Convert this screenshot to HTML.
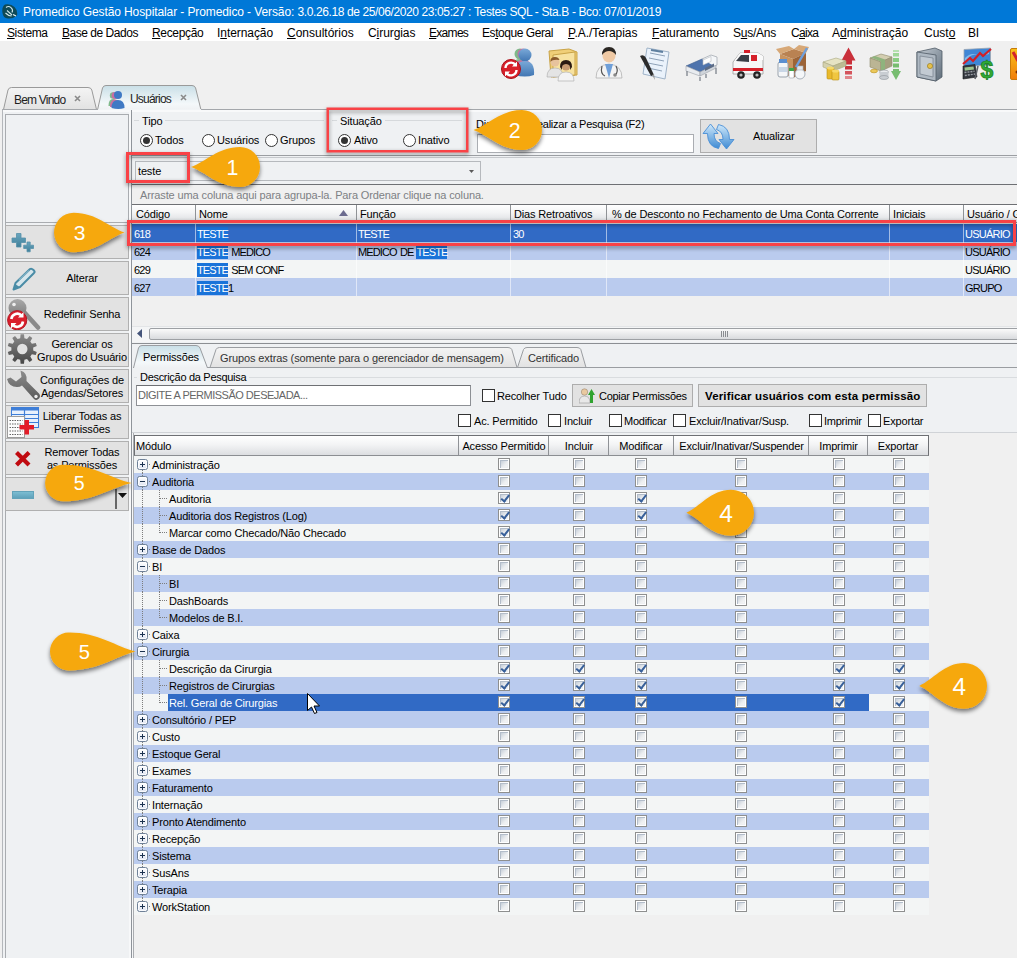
<!DOCTYPE html>
<html lang="pt-BR">
<head>
<meta charset="utf-8">
<title>Promedico Gestão Hospitalar</title>
<style>
*{box-sizing:border-box;margin:0;padding:0}
html,body{width:1017px;height:958px;overflow:hidden}
body{position:relative;background:#f0f0f0;font-family:"Liberation Sans",sans-serif;font-size:11px;letter-spacing:-0.15px;color:#000;line-height:13px}
.a{position:absolute;white-space:nowrap}
u{text-decoration:none}
/* title + menu */
#title{left:0;top:0;width:1017px;height:23px;background:#0078d7}
#title>span{left:23px;top:5px;color:#fff;font-size:12px;line-height:15px;letter-spacing:-0.26px}
#menu{left:0;top:23px;width:1017px;height:18px;background:#fff}
#menu span{position:absolute;top:3px;font-size:12px;line-height:15px;letter-spacing:-0.2px;white-space:nowrap}
#menu span em{font-style:normal;text-decoration:underline}
/* tabs */
.tabtx{font-size:12px;line-height:14px;letter-spacing:-0.8px;color:#1e1e1e}
/* panel */
#panel{left:2px;top:109px;width:1020px;height:860px;background:#eff1f3;border-top:1px solid #a4a7ab;border-left:1px solid #b4b7bb;box-shadow:inset 0 2px 0 #f8f9fa}
.hline{position:absolute;height:1px;background:#9c9fa3}
.vline{position:absolute;width:1px;background:#9c9fa3}
/* side buttons */
.sb{position:absolute;left:5px;width:124px;height:34px;background:#e2e2e2;border:1px solid #b0b0b0}
.sb .tx{position:absolute;left:30px;width:92px;text-align:center;line-height:13px;font-size:11px}
/* radios */
.rd{position:absolute;width:13px;height:13px;border-radius:50%;border:1px solid #333;background:#fff}
.rd.on:after{content:"";position:absolute;left:2px;top:2px;width:7px;height:7px;border-radius:50%;background:#333}
.bx{position:absolute;width:13px;height:13px;border:1px solid #333;background:#fff}
/* grid header */
.gh{position:absolute;height:19px;border-top:1px solid #6e7074;border-bottom:1px solid #8b8e92;background:linear-gradient(#ffffff,#f3f4f5 45%,#dcdee1)}
.gh span{position:absolute;top:3px;white-space:nowrap}
.gh i{position:absolute;top:0;width:1px;height:17px;background:#8f9296}
.gr{position:absolute;left:132px;width:885px;height:18px;background:#f3f5f5}
.gr.b{background:#bacbee}
.gr.s{background:#316ac5;color:#fff}
.gr span{position:absolute;top:4px;white-space:nowrap;letter-spacing:-.75px}
.gr i{position:absolute;top:0;width:1px;height:18px;background:rgba(255,255,255,.55)}
.gr mark{background:#1a73d9;color:#fff;padding:1px 0}
/* tree */
.tr{position:absolute;left:134px;width:795px;height:17px;background:#f3f5f5}
.tr.b{background:#bacbee}
.tr .tx{position:absolute;top:3px;white-space:nowrap}
.tr .selbg{position:absolute;left:34px;top:0;width:701px;height:17px;background:#316ac5}
.vl{position:absolute;width:1px;background-image:linear-gradient(#7d7d7d 50%,transparent 50%);background-size:1px 2px}
.hl{position:absolute;height:1px;background-image:linear-gradient(90deg,#7d7d7d 50%,transparent 50%);background-size:2px 1px}
.ex{position:absolute;left:3px;top:3px;width:11px;height:11px;border:1px solid #6f8198;border-radius:2.5px;background:linear-gradient(#ffffff,#dfe4f1);box-shadow:inset 0 0 0 1px rgba(255,255,255,.8)}
.ex:before{content:"";position:absolute;left:2px;top:4px;width:5px;height:1px;background:#1c3350}
.ex.pl:after{content:"";position:absolute;left:4px;top:2px;width:1px;height:5px;background:#1c3350}
.cb{position:absolute;top:2px;width:12px;height:12px;border:1px solid #8e8f8f;background:#fff}
.cb:before{content:"";position:absolute;left:1px;top:1px;width:8px;height:8px;background:linear-gradient(135deg,#bcc6d2,#eceef0 60%,#f8f8f8);box-shadow:inset 1px 1px 0 #b3bdca,inset -1px -1px 0 #eef0f2}
.cb.ck:after{content:"";position:absolute;left:4px;top:0px;width:2.5px;height:6.5px;border:solid #38609a;border-width:0 2px 2px 0;transform:rotate(38deg)}
/* callouts */
.red{position:absolute;border:2px solid #f94246;filter:drop-shadow(0 2px 2px rgba(0,0,0,.45))}
svg.co{position:absolute;overflow:visible}
svg.co text{font-family:"Liberation Sans",sans-serif;font-size:24px;fill:#fff;text-anchor:middle;letter-spacing:0}
</style>
</head>
<body>
<!-- title -->
<div id="title" class="a">
<svg class="a" style="left:2px;top:4px" width="16" height="15" viewBox="0 0 16 15"><path d="M3 0.500Q9 -0.500 12.500 3T15 11.500Q11 15 6 14.500T0.500 9Q-0.500 3 3 0.500Z" fill="#0e4a57"/><path d="M4 3.500a4 4 0 0 1 6 5M5 6.500l5 4.500M3.500 9q3 3 6 3" stroke="#cfe6ea" stroke-width="1.100" fill="none"/><path d="M11 10.500l3 1.500" stroke="#e6f2f4" stroke-width="1.300"/></svg>
<span class="a" style="white-space:pre"><span style="letter-spacing:-.1px">Promedico Gestão Hospitalar - Promedico - Versão: </span><span style="letter-spacing:-.39px">3.0.26.18 de 25/06/2020 23:05:27 : </span><span style="letter-spacing:-.37px">Testes SQL - Sta.B - Bco: </span><span style="letter-spacing:-.3px">07/01/2019</span></span>
</div>
<!-- menu -->
<div id="menu" class="a">
<span style="left:7px;letter-spacing:-.4px"><em>S</em>istema</span>
<span style="left:62px;letter-spacing:-.47px"><em>B</em>ase de Dados</span>
<span style="left:152px;letter-spacing:-.33px"><em>R</em>ecepção</span>
<span style="left:217px;letter-spacing:-.07px">I<em>n</em>ternação</span>
<span style="left:287px;letter-spacing:0"><em>C</em>onsultórios</span>
<span style="left:368px;letter-spacing:-.07px">C<em>i</em>rurgias</span>
<span style="left:429px;letter-spacing:-.7px"><em>E</em>xames</span>
<span style="left:482px;letter-spacing:-.44px">Es<em>t</em>oque Geral</span>
<span style="left:568px;letter-spacing:-.03px"><em>P</em>.A./Terapias</span>
<span style="left:652px;letter-spacing:-.09px"><em>F</em>aturamento</span>
<span style="left:733px;letter-spacing:-.24px">S<em>u</em>s/Ans</span>
<span style="left:791px;letter-spacing:-.7px">C<em>a</em>ixa</span>
<span style="left:832px;letter-spacing:0">A<em>d</em>ministração</span>
<span style="left:924px;letter-spacing:0">Cust<em>o</em></span>
<span style="left:968px">BI</span>
</div>
<svg class="a" style="left:495px;top:44px" width="522" height="40" viewBox="495 44 522 40">
<defs>
<linearGradient id="gb" x1="0" y1="0" x2="0" y2="1"><stop offset="0" stop-color="#7aa9d8"/><stop offset="1" stop-color="#4176b3"/></linearGradient>
<linearGradient id="gs" x1="0" y1="0" x2="1" y2="1"><stop offset="0" stop-color="#c4ccd4"/><stop offset="1" stop-color="#5f6d7a"/></linearGradient>
</defs>
<!-- 1 users refresh -->
<g><circle cx="520" cy="54" r="5.500" fill="#7fb98a"/><path d="M511 72q0-13 9-13t9 13z" fill="#7fb98a"/><circle cx="523" cy="54" r="5.500" fill="#c96fa2"/><path d="M513 73q0-13 10-13t10 13z" fill="#c96fa2"/><circle cx="525" cy="55" r="6.500" fill="url(#gb)"/><path d="M515 75q0-14 10-14t9 14q-9 3-19 0z" fill="url(#gb)"/><circle cx="511" cy="69" r="9.500" fill="#d8202a" stroke="#a80f18"/><path d="M505.500 68a5.500 5.500 0 0 1 10-3M516.500 70a5.500 5.500 0 0 1-10 3" fill="none" stroke="#fff" stroke-width="2.400"/><path d="M517 61.500v5h-5zM505 76.500v-5h5z" fill="#fff"/></g>
<!-- 2 folder people -->
<g><path d="M549 51l20-2 8 3v23l-26 2z" fill="#f0cf78" stroke="#c9a347"/><path d="M553 55l22-3v23l-22 2z" fill="#f7e2a0" stroke="#c9a347"/><circle cx="555" cy="62" r="4.500" fill="#e7c39d"/><path d="M555 57q-5 0-4.500 5 2-3 9-2-1-3-4.500-3z" fill="#8a5a2b"/><path d="M547 77q0-9 8-9t8 9z" fill="#e4e4e4" stroke="#aaa" stroke-width=".6"/><circle cx="566" cy="66" r="4.500" fill="#c89b72"/><path d="M566 60q-6 0-6 7l2 3q-1-6 4-6t4 6l2-3q0-7-6-7z" fill="#2b1a12"/><path d="M558 81q0-9 8-9t8 9z" fill="#f3f3f3" stroke="#aaa" stroke-width=".6"/></g>
<!-- 3 doctor -->
<g><path d="M596 78q0-13 13-14 13 1 13 14z" fill="#f4f4f4" stroke="#a9a9a9" stroke-width=".7"/><path d="M605 64l4 14 4-14z" fill="#6f9fd8"/><circle cx="609" cy="56" r="6.500" fill="#efc9a4"/><path d="M602 55q0-8 7-8t7 8q-3-4-7-4t-7 4z" fill="#2a2622"/><path d="M602 66q-2 8 3 10M616 66q3 6-1 9" fill="none" stroke="#555" stroke-width="1.200"/><circle cx="615" cy="75" r="1.800" fill="#888"/></g>
<!-- 4 document pen -->
<g><path d="M647 48l22 4-4 27-22-5z" fill="#eaf2fb" stroke="#9fb3c8"/><path d="M650 53l15 3M649 58l15 3M648 63l15 3M648 68l14 3" stroke="#8ea2b8" stroke-width="1"/><path d="M651 50l12 2" stroke="#5e7f9f" stroke-width="2"/><path d="M640 56q4-2 6 2l8 17-3 1z" fill="#2b2b2b"/><path d="M652 75l3 5-1-6z" fill="#999"/></g>
<!-- 5 bed -->
<g><path d="M686 66l16-7 14 5-16 8z" fill="#4f74ad" stroke="#3d5c8c" stroke-width=".6"/><path d="M686 66l14 6v4l-14-5z" fill="#e9ecf0" stroke="#9aa0a8" stroke-width=".6"/><path d="M700 72l16-8v4l-16 8z" fill="#cfd4da" stroke="#9aa0a8" stroke-width=".6"/><path d="M702 59l9-4 6 2v8l-3 1" fill="#f4f6f8" stroke="#a5abb3" stroke-width=".8"/><path d="M703 60l8-3.500v5l-8 3.500z" fill="#fdfdfd" stroke="#b5bac1" stroke-width=".6"/><path d="M687 71v5M700 77v4M716 68v6M706 74v4" stroke="#8c9199" stroke-width="1.500"/><path d="M705 68l9-4.500v3l-9 4.500z" fill="#5b6b86"/></g>
<!-- 6 ambulance -->
<g><path d="M733 62l7-9h18l5 3v18h-30z" fill="#f7f7f7" stroke="#a0a0a0" stroke-width=".8"/><path d="M740 53h18l5 3v4h-28z" fill="#fafafa"/><path d="M736 61l5-6h8v7z" fill="#3a3f47"/><path d="M733 68h30v3h-30z" fill="#d5202a"/><path d="M751 55h6v6h-6z" fill="#d5202a"/><path d="M744 50h6v3h-6z" fill="#d5202a"/><circle cx="741" cy="75" r="3.800" fill="#222"/><circle cx="741" cy="75" r="1.600" fill="#bbb"/><circle cx="757" cy="75" r="3.800" fill="#222"/><circle cx="757" cy="75" r="1.600" fill="#bbb"/></g>
<!-- 7 box + medicines -->
<g><path d="M780 54l14-5 12 4-13 6z" fill="#b98252"/><path d="M793 59l13-6v18l-13 7z" fill="#9c6437"/><path d="M780 54l13 5v19l-13-6z" fill="#c8935f"/><path d="M780 54l-4-5 13-3 5 3zM806 53l3-6-10-2-5 4z" fill="#d7a877"/><rect x="778" y="62" width="10" height="15" rx="2" fill="#f4f6f8" stroke="#9aa3ad"/><rect x="779" y="59" width="8" height="4" fill="#5b8fd0"/><rect x="779" y="67" width="8" height="5" fill="#c9d6e6"/><circle cx="800" cy="74" r="5" fill="#f4f6f8" stroke="#a9b1ba"/><rect x="797" y="66" width="6" height="4" fill="#e3e6ea" stroke="#a9b1ba" stroke-width=".6"/><path d="M807 48l-11 19" stroke="#6ea0dd" stroke-width="2.400"/><rect x="789" y="70" width="5" height="8" rx="1" fill="#fff" stroke="#9aa3ad" stroke-width=".6"/><rect x="789" y="68" width="5" height="3" fill="#3fa34a"/></g>
<!-- 8 money up -->
<g><path d="M848.500 47.500l7 13h-3.500v4h-7v-4h-3.500z" fill="#c9303a"/><rect x="845" y="66" width="7" height="3.500" fill="#c9303a"/><rect x="845" y="71" width="7" height="3.500" fill="#d4545c"/><rect x="845" y="76" width="7" height="3" fill="#e0868b"/><path d="M823 62l13-4 10 3-13 5z" fill="#e6e3c4" stroke="#a8a67e" stroke-width=".6"/><path d="M823 62l10 4v5l-10-4z" fill="#d4d1ae" stroke="#a8a67e" stroke-width=".6"/><path d="M833 66l13-5v5l-13 5z" fill="#bdbb93" stroke="#a8a67e" stroke-width=".6"/><rect x="827" y="68" width="7" height="11" rx="1" fill="#e9b92c" stroke="#b88d12" stroke-width=".6"/><rect x="832" y="71" width="7" height="9" rx="1" fill="#f0c640" stroke="#b88d12" stroke-width=".6"/><ellipse cx="830.500" cy="68" rx="3.500" ry="1.500" fill="#f7d968"/><ellipse cx="835.500" cy="71" rx="3.500" ry="1.500" fill="#f7d968"/></g>
<!-- 9 money down -->
<g><path d="M896 80l5-9h-2v-2h-6v2h-2z" fill="#77bd70"/><rect x="893" y="63.500" width="6" height="4" fill="#77bd70"/><rect x="893" y="58" width="6" height="4" fill="#8acc82"/><rect x="893" y="53" width="6" height="3.500" fill="#9fd698"/><rect x="893" y="50" width="6" height="2" fill="#b6e0b0"/><path d="M870 58l11-4 11 3-11 5z" fill="#d3cdb0" stroke="#8f8a6b" stroke-width=".6"/><path d="M870 58l11 4v9l-11-4z" fill="#bbb594" stroke="#8f8a6b" stroke-width=".6"/><path d="M881 62l11-5v9l-11 5z" fill="#a59f7f" stroke="#8f8a6b" stroke-width=".6"/><path d="M875 56l10 3.500v10l-4 1.500v-9.500l-10-4z" fill="#8fb37d"/><ellipse cx="884" cy="72" rx="4.500" ry="2" fill="#e9ebee" stroke="#8d9299" stroke-width=".6"/><rect x="879.500" y="72" width="9" height="5.500" fill="#c9cdd2"/><ellipse cx="884" cy="77.500" rx="4.500" ry="2" fill="#c9cdd2" stroke="#8d9299" stroke-width=".6"/><ellipse cx="874" cy="71" rx="3.500" ry="1.800" fill="#ecc95a" stroke="#b88d12" stroke-width=".6"/></g>
<!-- 10 safe -->
<g><path d="M917 52l18-4 7 3v26l-6 4-19-4z" fill="url(#gs)" stroke="#4f5a66" stroke-width=".8"/><path d="M917 52l19 3v26l-19-4z" fill="#aeb8c2" stroke="#4f5a66" stroke-width=".8"/><path d="M920 56l13 2v19l-13-3z" fill="#c2cad2" stroke="#7c8792" stroke-width=".8"/><circle cx="930" cy="66" r="2.600" fill="#e6c04a" stroke="#8f7417" stroke-width=".6"/></g>
<!-- 11 chart calculator dollar -->
<g><path d="M964 49.500l26.500-1.500v17l-26.500 1.500z" fill="#3f86d6" stroke="#9aa6b3" stroke-width=".8"/><path d="M965 58q6-6 12-3t12-5v4q-8 3-13 1t-11 7z" fill="#9fd0f2" opacity=".7"/><path d="M963 64l7-6 3 3 7-8 3 3 8-7" fill="none" stroke="#d21f26" stroke-width="2.200"/><path d="M963 66l12-1.500 2 12.500-14 2z" fill="#33373e" stroke="#15171a" stroke-width=".6"/><path d="M964.500 67.500l9-1 .5 3-9.200 1.200z" fill="#9dc58e"/><path d="M964.500 72.500l10-1.300M964.800 75.500l10.200-1.500" stroke="#9a9ea5" stroke-width="1.400" stroke-dasharray="2 1"/><path d="M978 66l-3 13" stroke="#5d6168" stroke-width="1.500"/><text x="980.500" y="78" style="font-family:'Liberation Sans',sans-serif;font-size:23px;font-weight:bold;fill:#2faa35;stroke:#1a7d20;stroke-width:.7px">$</text></g>
<!-- 12 partial -->
<g><defs><linearGradient id="og" x1="0" y1="0" x2="0" y2="1"><stop offset="0" stop-color="#f9c21a"/><stop offset="1" stop-color="#f07d0a"/></linearGradient></defs><rect x="1010.500" y="48.500" width="10" height="31" rx="1.500" fill="url(#og)" stroke="#c77a08"/><path d="M1013 52l5 9" stroke="#d2232c" stroke-width="3"/><circle cx="1017" cy="72" r="1.500" fill="#7a2a00"/></g>
</svg>

<svg class="a" style="left:0;top:84px" width="220" height="27" viewBox="0 0 220 27">
<defs><linearGradient id="tg1" x1="0" y1="0" x2="0" y2="1"><stop offset="0" stop-color="#f4f4f4"/><stop offset="1" stop-color="#e2e2e2"/></linearGradient>
<linearGradient id="tg2" x1="0" y1="0" x2="0" y2="1"><stop offset="0" stop-color="#c9dfe7"/><stop offset=".75" stop-color="#f4f8fa"/><stop offset="1" stop-color="#eff1f3"/></linearGradient></defs>
<path d="M3.5 25.5 L8 6 Q8.8 3.5 11.5 3.5 H88 Q91 3.5 91.8 6 L96.5 25.5 Z" fill="url(#tg1)" stroke="#9a9a9a"/>
<path d="M97.5 26 L102.5 4 Q103.3 1.5 106 1.5 H192 Q194.8 1.5 195.6 4 L201 26" fill="url(#tg2)" stroke="#9a9a9a"/>
<g stroke="#8a8a8a" stroke-width="1.6"><path d="M75 12l5 5m0-5l-5 5"/><path d="M181 11l5 5m0-5l-5 5"/></g>
<g><circle cx="113" cy="11.5" r="3.2" fill="#7fb98a"/><path d="M108.5 22q0-7 4.5-7t4.5 7z" fill="#7fb98a"/><circle cx="115" cy="11.5" r="3.4" fill="#c96fa2"/><path d="M110 23q0-7.5 5-7.5t5 7.5z" fill="#c96fa2"/><circle cx="118" cy="11" r="4" fill="#3f79c4"/><path d="M111.5 24q0-8 6.500-8t6.500 8q-6 2-13 0z" fill="#3f79c4"/></g>
</svg>
<span class="a tabtx" style="left:14px;top:93px">Bem Vindo</span>
<span class="a tabtx" style="left:130px;top:92px">Usuários</span>

<div id="panel" class="a"></div>
<div class="a" style="left:98px;top:109px;width:103px;height:1px;background:#f1f4f6"></div>
<div class="vline" style="left:5px;top:114px;height:850px;background:#a9acb0"></div>
<div class="vline" style="left:129px;top:110px;width:2px;height:850px;background:#f7f8f9"></div><div class="vline" style="left:131px;top:110px;height:850px;background:#8f949a"></div>
<div class="a" style="left:5px;top:114px;width:124px;height:109px;border:1px solid #a9acb0;background:#eff1f3"></div>
<!-- side buttons -->
<div class="sb" style="top:225px">
<svg class="a" style="left:5px;top:6px" width="26" height="22" viewBox="0 0 26 22"><defs><linearGradient id="tl" x1="0" y1="0" x2="0" y2="1"><stop offset="0" stop-color="#6aa6bf"/><stop offset="1" stop-color="#3f7f99"/></linearGradient></defs><path d="M5.500 1.500h4.500v4.500h4.500v4.500H10v4.500H5.500v-4.500H1V6h4.500z" fill="url(#tl)" stroke="#5590a9" stroke-width=".8"/><path d="M16 10h3.200v3.200h3.300v3.300h-3.300v3.300H16v-3.300h-3.300v-3.300H16z" fill="url(#tl)" stroke="#5590a9" stroke-width=".8"/></svg>
</div>
<div class="sb" style="top:261px">
<svg class="a" style="left:5px;top:4px" width="26" height="26" viewBox="0 0 26 26"><path d="M2.500 23.500l2-6.500L19 3q1.500-1 3.500 1t.5 3L9 21z" fill="#d7e6ec" stroke="#4a8ca6" stroke-width="2" stroke-linejoin="round"/><path d="M2.500 23.500l1.800-5.500 4.500 3.200z" fill="#4a8ca6"/><path d="M8 14l10-9.500" stroke="#7fb0c4" stroke-width="1.500"/></svg>
<span class="tx" style="top:10px">Alterar</span></div>
<div class="sb" style="top:297px">
<svg class="a" style="left:0;top:0" width="36" height="32" viewBox="0 0 36 32"><defs><linearGradient id="kg" x1="0" y1="0" x2="0" y2="1"><stop offset="0" stop-color="#a9a9a9"/><stop offset="1" stop-color="#7c7c7c"/></linearGradient></defs><path d="M18 14l14 15.500" stroke="#8a8a8a" stroke-width="4.600" stroke-linecap="round"/><circle cx="11.500" cy="10" r="9" fill="url(#kg)"/><circle cx="8" cy="6.500" r="1.800" fill="#eee"/><circle cx="11.200" cy="22.200" r="9.600" fill="#da1f2c" stroke="#b31622"/><path d="M5.300 21a6 6 0 0 1 10.500-3.200M17 23.500a6 6 0 0 1-10.500 3.200" fill="none" stroke="#fff" stroke-width="2.600"/><path d="M17.500 14v5.500H12zM5 30.500V25h5.500z" fill="#fff"/></svg>
<span class="tx" style="top:10px">Redefinir Senha</span></div>
<div class="sb" style="top:333px">
<svg class="a" style="left:1px;top:0" width="32" height="31" viewBox="0 0 32 31"><defs><linearGradient id="gg" x1="0" y1="0" x2="0" y2="1"><stop offset="0" stop-color="#8a8a8a"/><stop offset="1" stop-color="#474747"/></linearGradient></defs><path fill-rule="evenodd" d="M13.2 4.2 L13.6 0.3 L17.0 0.3 L17.4 4.2 L20.0 5.0 L22.6 2.1 L25.3 4.1 L23.3 7.5 L24.9 9.7 L28.8 8.9 L29.8 12.0 L26.2 13.6 L26.2 16.4 L29.8 18.0 L28.8 21.1 L24.9 20.3 L23.3 22.5 L25.3 25.9 L22.6 27.9 L20.0 25.0 L17.4 25.8 L17.0 29.7 L13.6 29.7 L13.2 25.8 L10.6 25.0 L8.0 27.9 L5.3 25.9 L7.3 22.5 L5.7 20.3 L1.8 21.1 L0.8 18.0 L4.4 16.4 L4.4 13.6 L0.8 12.0 L1.8 8.9 L5.7 9.7 L7.3 7.5 L5.3 4.1 L8.0 2.1 L10.6 5.0Z M10.1 15a5.2 5.2 0 1 0 10.4 0a5.2 5.2 0 1 0 -10.4 0Z" fill="url(#gg)"/></svg>
<span class="tx" style="top:4px">Gerenciar os<br>Grupos do Usuário</span></div>
<div class="sb" style="top:369px">
<svg class="a" style="left:0;top:0" width="36" height="32" viewBox="0 0 36 32"><defs><linearGradient id="wg" x1="0" y1="0" x2="0" y2="1"><stop offset="0" stop-color="#8d8d8d"/><stop offset="1" stop-color="#5a5a5a"/></linearGradient></defs><path d="M1 9 Q3 17 11 17 Q14 17 16 15.500 L28 29 Q30.500 31 33 28.500 Q35 26 33 23.500 L20.500 11 Q22 3 14.500 0.500 L15.500 7 L10 11.500 L4.500 7.500 Z" fill="url(#wg)"/><circle cx="30" cy="26.500" r="1.700" fill="#eee"/></svg>
<span class="tx" style="top:4px">Configurações de<br>Agendas/Setores</span></div>
<div class="sb" style="top:405px">
<svg class="a" style="left:0;top:0" width="36" height="33" viewBox="0 0 36 33"><rect x="5.500" y="1.500" width="27" height="20" fill="#e8f1fd" stroke="#3f7fd8"/><rect x="5.500" y="1.500" width="27" height="3" fill="#3f7fd8"/><path d="M5.500 8.500h27M5.500 12.500h27M5.500 16.500h27M18.500 1.500v20" stroke="#3f7fd8" stroke-width="1.200"/><rect x="1.500" y="10.500" width="17" height="21" fill="#fcfcfc" stroke="#9c9c9c"/><path d="M3.500 14.500h13M3.500 18h13M3.500 21.500h13M3.500 25h13M3.500 28.500h13" stroke="#666" stroke-dasharray="1.500 1"/><path d="M18.500 14h4.500v5h5v4.500h-5v5h-4.500v-5h-5V19h5z" fill="#e31c28"/></svg>
<span class="tx" style="top:4px">Liberar Todas as<br>Permissões</span></div>
<div class="sb" style="top:441px">
<svg class="a" style="left:8px;top:8px" width="18" height="18" viewBox="0 0 18 18"><path d="M2.500 2.500l12.500 12.500M15 2.500L2.500 15" stroke="#c00a10" stroke-width="4.200"/></svg>
<span class="tx" style="top:4px">Remover Todas<br>as Permissões</span></div>
<div class="sb" style="top:477px">
<div class="a" style="left:6px;top:13px;width:22px;height:8px;background:linear-gradient(#7cbdd2,#5fa2bb);border:1px solid #62a3ba"></div>
<div class="a" style="left:109px;top:11px;width:2px;height:20px;background:#666"></div>
<svg class="a" style="left:112px;top:15px" width="9" height="5" viewBox="0 0 9 5"><path d="M0 0h9L4.500 5z" fill="#111"/></svg>
</div>

<!-- Tipo group -->
<div class="hline" style="left:134px;top:120px;width:190px;background:#d6d9dc"></div>
<span class="a" style="left:139px;top:115px;background:#eff1f3;padding:0 3px">Tipo</span>
<i class="rd on" style="left:140px;top:134px"></i><span class="a" style="left:155px;top:134px">Todos</span>
<i class="rd" style="left:202px;top:134px"></i><span class="a" style="left:217px;top:134px">Usuários</span>
<i class="rd" style="left:265px;top:134px"></i><span class="a" style="left:280px;top:134px">Grupos</span>
<div class="hline" style="left:332px;top:120px;width:130px;background:#d6d9dc"></div>
<span class="a" style="left:337px;top:115px;background:#eff1f3;padding:0 3px">Situação</span>
<i class="rd on" style="left:338px;top:134px"></i><span class="a" style="left:354px;top:134px">Ativo</span>
<i class="rd" style="left:403px;top:134px"></i><span class="a" style="left:418px;top:134px">Inativo</span>
<span class="a" style="left:476px;top:118px;letter-spacing:-.25px">Digite para Realizar a Pesquisa (F2)</span>
<div class="a" style="left:477px;top:134px;width:217px;height:19px;background:#fff;border:1px solid #aaadb2"></div>
<div class="a" style="left:700px;top:119px;width:117px;height:34px;background:#e2e2e2;border:1px solid #adadad">
<svg class="a" style="left:1px;top:3px" width="33" height="27" viewBox="0 0 33 27"><defs><linearGradient id="rg" x1="0" y1="0" x2="0" y2="1"><stop offset="0" stop-color="#cfe8fa"/><stop offset="1" stop-color="#3f8bd3"/></linearGradient></defs><path d="M8.500 1L16 10.500H12Q12 18.500 18.500 20.500L16.500 25.500Q5.500 23.500 5.500 10.500H1Z" fill="url(#rg)" stroke="#4a8fd6" stroke-width=".9" stroke-linejoin="round"/><path d="M24.500 26L17 16.500H21Q21 8.500 14.500 6.500L16.500 1.500Q27.500 3.500 27.500 16.500H32Z" fill="url(#rg)" stroke="#4a8fd6" stroke-width=".9" stroke-linejoin="round"/></svg>
<span class="a" style="left:52px;top:10px">Atualizar</span></div>
<div class="hline" style="left:132px;top:155px;width:890px;background:#9b9ea2"></div>
<div class="hline" style="left:132px;top:157px;width:890px;background:#c6c9cd"></div>
<!-- combo -->
<div class="a" style="left:135px;top:161px;width:346px;height:20px;border:1px solid #b6b9bd;background:#eff1f3"></div>
<span class="a" style="left:138px;top:165px">teste</span>
<svg class="a" style="left:469px;top:170px" width="5" height="3" viewBox="0 0 5 3"><path d="M0 0h5L2.500 3z" fill="#5a5a5a"/></svg>

<!-- upper grid -->
<div class="hline" style="left:132px;top:184px;width:890px;background:#6e7074"></div>
<div class="a" style="left:132px;top:185px;width:890px;height:141px;background:#f0f0f0"></div>
<span class="a" style="left:140px;top:189px;color:#7d8084;letter-spacing:-.12px">Arraste uma coluna aqui para agrupa-la. Para Ordenar clique na coluna.</span>
<div class="gh" style="left:132px;top:204px;width:890px">
<span style="left:4px">Código</span><i style="left:63px"></i>
<span style="left:67px">Nome</span><i style="left:224px"></i>
<svg class="a" style="left:207px;top:5px" width="9" height="6" viewBox="0 0 9 6"><path d="M0 6h9L4.500 0z" fill="#6b6b8f"/></svg>
<span style="left:228px">Função</span><i style="left:378px"></i>
<span style="left:382px">Dias Retroativos</span><i style="left:474px"></i>
<span style="left:480px">% de Desconto no Fechamento de Uma Conta Corrente</span><i style="left:757px"></i>
<span style="left:761px">Iniciais</span><i style="left:831px"></i>
<span style="left:835px">Usuário / Grupo</span>
</div>
<div class="gr s" style="top:224px"><span style="left:2px">618</span><i style="left:63px"></i><span style="left:65px;letter-spacing:-.88px;word-spacing:1px"><mark>TESTE</mark></span><i style="left:224px"></i><span style="left:226px;letter-spacing:-.88px;word-spacing:1px">TESTE</span><i style="left:378px"></i><span style="left:381px">30</span><i style="left:474px"></i><i style="left:757px"></i><i style="left:831px"></i><span style="left:833px">USUÁRIO</span></div>
<div class="gr b" style="top:242px"><span style="left:2px">624</span><i style="left:63px"></i><span style="left:65px;letter-spacing:-.88px;word-spacing:1px"><mark>TESTE</mark> MEDICO</span><i style="left:224px"></i><span style="left:226px;letter-spacing:-.88px;word-spacing:1px">MEDICO DE <mark>TESTE</mark></span><i style="left:378px"></i><i style="left:474px"></i><i style="left:757px"></i><i style="left:831px"></i><span style="left:833px">USUÁRIO</span></div>
<div class="gr" style="top:260px"><span style="left:2px">629</span><i style="left:63px"></i><span style="left:65px;letter-spacing:-.88px;word-spacing:1px"><mark>TESTE</mark> SEM CONF</span><i style="left:224px"></i><i style="left:378px"></i><i style="left:474px"></i><i style="left:757px"></i><i style="left:831px"></i><span style="left:833px">USUÁRIO</span></div>
<div class="gr b" style="top:278px"><span style="left:2px">627</span><i style="left:63px"></i><span style="left:65px;letter-spacing:-.88px;word-spacing:1px"><mark>TESTE</mark>1</span><i style="left:224px"></i><i style="left:378px"></i><i style="left:474px"></i><i style="left:757px"></i><i style="left:831px"></i><span style="left:833px">GRUPO</span></div>
<!-- scrollbar -->
<div class="a" style="left:132px;top:326px;width:890px;height:16px;background:#f4f5f6;border-top:1px solid #e3e5e7"></div>
<svg class="a" style="left:137px;top:329px" width="5" height="9" viewBox="0 0 5 9"><path d="M5 0v9L0 4.500z" fill="#44547a"/></svg>
<div class="a" style="left:149px;top:328px;width:880px;height:12px;border:1px solid #9da0a4;border-radius:2px;background:linear-gradient(#fafafa,#d9dbde)"></div>
<div class="a" style="left:721px;top:331px;width:8px;height:6px;background-image:linear-gradient(90deg,#8a8d91 50%,transparent 50%);background-size:2px 6px"></div>
<div class="hline" style="left:132px;top:343px;width:890px;background:#8c8f93"></div>

<!-- lower tabs -->
<svg class="a" style="left:130px;top:343px" width="890" height="26" viewBox="0 0 890 26">
<path d="M3 24.500H890" stroke="#9a9da1"/>
<path d="M3.500 25 L8.500 5 Q9.300 2.500 12 2.500 H66 Q69 2.500 70 5 L77.500 25" fill="url(#tg2)" stroke="#9a9da1"/>
<path d="M80 24.500 L86 6.500 Q87 4.500 89.500 4.500 H378 Q381 4.500 381.800 6.500 L387 24.500 Z" fill="url(#tg1)" stroke="#9a9da1"/>
<path d="M387.500 24.500 L393.500 6.500 Q394.500 4.500 397 4.500 H447 Q450 4.500 450.800 6.500 L456 24.500 Z" fill="url(#tg1)" stroke="#9a9da1"/>
</svg>
<span class="a" style="left:143px;top:351px">Permissões</span>
<span class="a" style="left:220px;top:352px;color:#333;letter-spacing:-.11px">Grupos extras (somente para o gerenciador de mensagem)</span>
<span class="a" style="left:528px;top:352px;color:#333">Certificado</span>
<!-- search group -->
<div class="hline" style="left:134px;top:377px;width:890px;background:#d9dcdf"></div>
<span class="a" style="left:137px;top:371px;background:#eff1f3;padding:0 3px;letter-spacing:-.3px">Descrição da Pesquisa</span>
<div class="a" style="left:136px;top:385px;width:335px;height:21px;background:#fff;border:1px solid #8d9095;border-top-color:#6e7074"></div>
<span class="a" style="left:138px;top:389px;color:#666;letter-spacing:-.5px">DIGITE A PERMISSÃO DESEJADA...</span>
<i class="bx" style="left:482px;top:389px"></i><span class="a" style="left:497px;top:390px">Recolher Tudo</span>
<div class="a" style="left:572px;top:384px;width:121px;height:23px;background:#e2e2e2;border:1px solid #adadad">
<svg class="a" style="left:6px;top:3px" width="17" height="16" viewBox="0 0 17 16"><circle cx="5.500" cy="4" r="3.200" fill="#e9c9a0" stroke="#9b8a74" stroke-width=".6"/><path d="M0 15q0-7 5.500-7t5.500 7z" fill="#e8e8e8" stroke="#999" stroke-width=".6"/><path d="M11 15V7H9l3.500-6L16 7h-2v8z" fill="#2fa32f"/></svg>
<span class="a" style="left:26px;top:5px;letter-spacing:-.3px">Copiar Permissões</span></div>
<div class="a" style="left:698px;top:384px;width:229px;height:23px;background:#e2e2e2;border:1px solid #adadad"><span class="a" style="left:6px;top:5px;font-weight:bold;font-size:11.5px;letter-spacing:.14px">Verificar usuários com esta permissão</span></div>
<i class="bx" style="left:458px;top:414px"></i><span class="a" style="left:474px;top:415px">Ac. Permitido</span>
<i class="bx" style="left:548px;top:414px"></i><span class="a" style="left:564px;top:415px">Incluir</span>
<i class="bx" style="left:609px;top:414px"></i><span class="a" style="left:624px;top:415px;letter-spacing:-.25px">Modificar</span>
<i class="bx" style="left:673px;top:414px"></i><span class="a" style="left:689px;top:415px">Excluir/Inativar/Susp.</span>
<i class="bx" style="left:809px;top:414px"></i><span class="a" style="left:824px;top:415px;letter-spacing:-.25px">Imprimir</span>
<i class="bx" style="left:868px;top:414px"></i><span class="a" style="left:883px;top:415px">Exportar</span>
<div class="hline" style="left:132px;top:432px;width:890px;background:#d0d3d7"></div>
<div class="a" style="left:929px;top:433px;width:90px;height:530px;background:#f0f0f0"></div>
<div class="a" style="left:134px;top:915px;width:797px;height:50px;background:#f0f0f0"></div>
<div class="vline" style="left:132px;top:433px;width:1px;height:530px;background:#f6f7f8"></div><div class="vline" style="left:133px;top:433px;height:530px;background:#a9acb0"></div>
<!-- tree header -->
<div class="gh" style="left:134px;top:435px;width:795px;height:21px;border:1px solid #6e7074;border-bottom-color:#8b8e92">
<span style="left:1px;top:4px">Módulo</span><i style="left:323px;height:19px"></i>
<span style="left:324px;width:90px;text-align:center;top:4px">Acesso Permitido</span><i style="left:413px;height:19px"></i>
<span style="left:414px;width:60px;text-align:center;top:4px">Incluir</span><i style="left:473px;height:19px"></i>
<span style="left:474px;width:64px;text-align:center;top:4px">Modificar</span><i style="left:538px;height:19px"></i>
<span style="left:539px;width:135px;text-align:center;top:4px">Excluir/Inativar/Suspender</span><i style="left:673px;height:19px"></i>
<span style="left:674px;width:59px;text-align:center;top:4px">Imprimir</span><i style="left:732px;height:19px"></i>
<span style="left:733px;width:60px;text-align:center;top:4px">Exportar</span>
</div>

<div class="tr" style="top:456px">
<i class="vl" style="left:8px;top:8px;height:9px"></i>
<i class="hl" style="left:13px;top:8px;width:4px"></i>
<b class="ex pl"></b>
<span class="tx" style="left:18px">Administração</span>
<u class="cb" style="left:364px"></u>
<u class="cb" style="left:439px"></u>
<u class="cb" style="left:501px"></u>
<u class="cb" style="left:601px"></u>
<u class="cb" style="left:699px"></u>
<u class="cb" style="left:759px"></u>
</div>
<div class="tr b" style="top:473px">
<i class="vl" style="left:8px;top:0px;height:17px"></i>
<i class="hl" style="left:13px;top:8px;width:4px"></i>
<b class="ex mi"></b>
<span class="tx" style="left:18px">Auditoria</span>
<u class="cb" style="left:364px"></u>
<u class="cb" style="left:439px"></u>
<u class="cb" style="left:501px"></u>
<u class="cb" style="left:601px"></u>
<u class="cb" style="left:699px"></u>
<u class="cb" style="left:759px"></u>
</div>
<div class="tr" style="top:490px">
<i class="vl" style="left:8px;top:0;height:17px"></i>
<i class="vl" style="left:25px;top:0;height:17px"></i>
<i class="hl" style="left:26px;top:8px;width:8px"></i>
<span class="tx" style="left:35px">Auditoria</span>
<u class="cb ck" style="left:364px"></u>
<u class="cb" style="left:439px"></u>
<u class="cb ck" style="left:501px"></u>
<u class="cb" style="left:601px"></u>
<u class="cb" style="left:699px"></u>
<u class="cb" style="left:759px"></u>
</div>
<div class="tr b" style="top:507px">
<i class="vl" style="left:8px;top:0;height:17px"></i>
<i class="vl" style="left:25px;top:0;height:17px"></i>
<i class="hl" style="left:26px;top:8px;width:8px"></i>
<span class="tx" style="left:35px">Auditoria dos Registros (Log)</span>
<u class="cb ck" style="left:364px"></u>
<u class="cb" style="left:439px"></u>
<u class="cb ck" style="left:501px"></u>
<u class="cb" style="left:601px"></u>
<u class="cb" style="left:699px"></u>
<u class="cb" style="left:759px"></u>
</div>
<div class="tr" style="top:524px">
<i class="vl" style="left:8px;top:0;height:17px"></i>
<i class="vl" style="left:25px;top:0;height:9px"></i>
<i class="hl" style="left:26px;top:8px;width:8px"></i>
<span class="tx" style="left:35px">Marcar como Checado/Não Checado</span>
<u class="cb ck" style="left:364px"></u>
<u class="cb" style="left:439px"></u>
<u class="cb" style="left:501px"></u>
<u class="cb" style="left:601px"></u>
<u class="cb" style="left:699px"></u>
<u class="cb" style="left:759px"></u>
</div>
<div class="tr b" style="top:541px">
<i class="vl" style="left:8px;top:0px;height:17px"></i>
<i class="hl" style="left:13px;top:8px;width:4px"></i>
<b class="ex pl"></b>
<span class="tx" style="left:18px">Base de Dados</span>
<u class="cb" style="left:364px"></u>
<u class="cb" style="left:439px"></u>
<u class="cb" style="left:501px"></u>
<u class="cb" style="left:601px"></u>
<u class="cb" style="left:699px"></u>
<u class="cb" style="left:759px"></u>
</div>
<div class="tr" style="top:558px">
<i class="vl" style="left:8px;top:0px;height:17px"></i>
<i class="hl" style="left:13px;top:8px;width:4px"></i>
<b class="ex mi"></b>
<span class="tx" style="left:18px">BI</span>
<u class="cb" style="left:364px"></u>
<u class="cb" style="left:439px"></u>
<u class="cb" style="left:501px"></u>
<u class="cb" style="left:601px"></u>
<u class="cb" style="left:699px"></u>
<u class="cb" style="left:759px"></u>
</div>
<div class="tr b" style="top:575px">
<i class="vl" style="left:8px;top:0;height:17px"></i>
<i class="vl" style="left:25px;top:0;height:17px"></i>
<i class="hl" style="left:26px;top:8px;width:8px"></i>
<span class="tx" style="left:35px">BI</span>
<u class="cb" style="left:364px"></u>
<u class="cb" style="left:439px"></u>
<u class="cb" style="left:501px"></u>
<u class="cb" style="left:601px"></u>
<u class="cb" style="left:699px"></u>
<u class="cb" style="left:759px"></u>
</div>
<div class="tr" style="top:592px">
<i class="vl" style="left:8px;top:0;height:17px"></i>
<i class="vl" style="left:25px;top:0;height:17px"></i>
<i class="hl" style="left:26px;top:8px;width:8px"></i>
<span class="tx" style="left:35px">DashBoards</span>
<u class="cb" style="left:364px"></u>
<u class="cb" style="left:439px"></u>
<u class="cb" style="left:501px"></u>
<u class="cb" style="left:601px"></u>
<u class="cb" style="left:699px"></u>
<u class="cb" style="left:759px"></u>
</div>
<div class="tr b" style="top:609px">
<i class="vl" style="left:8px;top:0;height:17px"></i>
<i class="vl" style="left:25px;top:0;height:9px"></i>
<i class="hl" style="left:26px;top:8px;width:8px"></i>
<span class="tx" style="left:35px">Modelos de B.I.</span>
<u class="cb" style="left:364px"></u>
<u class="cb" style="left:439px"></u>
<u class="cb" style="left:501px"></u>
<u class="cb" style="left:601px"></u>
<u class="cb" style="left:699px"></u>
<u class="cb" style="left:759px"></u>
</div>
<div class="tr" style="top:626px">
<i class="vl" style="left:8px;top:0px;height:17px"></i>
<i class="hl" style="left:13px;top:8px;width:4px"></i>
<b class="ex pl"></b>
<span class="tx" style="left:18px">Caixa</span>
<u class="cb" style="left:364px"></u>
<u class="cb" style="left:439px"></u>
<u class="cb" style="left:501px"></u>
<u class="cb" style="left:601px"></u>
<u class="cb" style="left:699px"></u>
<u class="cb" style="left:759px"></u>
</div>
<div class="tr b" style="top:643px">
<i class="vl" style="left:8px;top:0px;height:17px"></i>
<i class="hl" style="left:13px;top:8px;width:4px"></i>
<b class="ex mi"></b>
<span class="tx" style="left:18px">Cirurgia</span>
<u class="cb" style="left:364px"></u>
<u class="cb" style="left:439px"></u>
<u class="cb" style="left:501px"></u>
<u class="cb" style="left:601px"></u>
<u class="cb" style="left:699px"></u>
<u class="cb" style="left:759px"></u>
</div>
<div class="tr" style="top:660px">
<i class="vl" style="left:8px;top:0;height:17px"></i>
<i class="vl" style="left:25px;top:0;height:17px"></i>
<i class="hl" style="left:26px;top:8px;width:8px"></i>
<span class="tx" style="left:35px">Descrição da Cirurgia</span>
<u class="cb ck" style="left:364px"></u>
<u class="cb ck" style="left:439px"></u>
<u class="cb ck" style="left:501px"></u>
<u class="cb" style="left:601px"></u>
<u class="cb ck" style="left:699px"></u>
<u class="cb ck" style="left:759px"></u>
</div>
<div class="tr b" style="top:677px">
<i class="vl" style="left:8px;top:0;height:17px"></i>
<i class="vl" style="left:25px;top:0;height:17px"></i>
<i class="hl" style="left:26px;top:8px;width:8px"></i>
<span class="tx" style="left:35px">Registros de Cirurgias</span>
<u class="cb ck" style="left:364px"></u>
<u class="cb ck" style="left:439px"></u>
<u class="cb ck" style="left:501px"></u>
<u class="cb" style="left:601px"></u>
<u class="cb ck" style="left:699px"></u>
<u class="cb ck" style="left:759px"></u>
</div>
<div class="tr" style="top:694px">
<div class="selbg"></div>
<i class="vl" style="left:8px;top:0;height:17px"></i>
<i class="vl" style="left:25px;top:0;height:9px"></i>
<i class="hl" style="left:26px;top:8px;width:8px"></i>
<span class="tx" style="left:35px;color:#fff">Rel. Geral de Cirurgias</span>
<u class="cb ck" style="left:364px"></u>
<u class="cb ck" style="left:439px"></u>
<u class="cb ck" style="left:501px"></u>
<u class="cb" style="left:601px"></u>
<u class="cb ck" style="left:699px"></u>
<u class="cb ck" style="left:759px"></u>
</div>
<div class="tr b" style="top:711px">
<i class="vl" style="left:8px;top:0px;height:17px"></i>
<i class="hl" style="left:13px;top:8px;width:4px"></i>
<b class="ex pl"></b>
<span class="tx" style="left:18px">Consultório / PEP</span>
<u class="cb" style="left:364px"></u>
<u class="cb" style="left:439px"></u>
<u class="cb" style="left:501px"></u>
<u class="cb" style="left:601px"></u>
<u class="cb" style="left:699px"></u>
<u class="cb" style="left:759px"></u>
</div>
<div class="tr" style="top:728px">
<i class="vl" style="left:8px;top:0px;height:17px"></i>
<i class="hl" style="left:13px;top:8px;width:4px"></i>
<b class="ex pl"></b>
<span class="tx" style="left:18px">Custo</span>
<u class="cb" style="left:364px"></u>
<u class="cb" style="left:439px"></u>
<u class="cb" style="left:501px"></u>
<u class="cb" style="left:601px"></u>
<u class="cb" style="left:699px"></u>
<u class="cb" style="left:759px"></u>
</div>
<div class="tr b" style="top:745px">
<i class="vl" style="left:8px;top:0px;height:17px"></i>
<i class="hl" style="left:13px;top:8px;width:4px"></i>
<b class="ex pl"></b>
<span class="tx" style="left:18px">Estoque Geral</span>
<u class="cb" style="left:364px"></u>
<u class="cb" style="left:439px"></u>
<u class="cb" style="left:501px"></u>
<u class="cb" style="left:601px"></u>
<u class="cb" style="left:699px"></u>
<u class="cb" style="left:759px"></u>
</div>
<div class="tr" style="top:762px">
<i class="vl" style="left:8px;top:0px;height:17px"></i>
<i class="hl" style="left:13px;top:8px;width:4px"></i>
<b class="ex pl"></b>
<span class="tx" style="left:18px">Exames</span>
<u class="cb" style="left:364px"></u>
<u class="cb" style="left:439px"></u>
<u class="cb" style="left:501px"></u>
<u class="cb" style="left:601px"></u>
<u class="cb" style="left:699px"></u>
<u class="cb" style="left:759px"></u>
</div>
<div class="tr b" style="top:779px">
<i class="vl" style="left:8px;top:0px;height:17px"></i>
<i class="hl" style="left:13px;top:8px;width:4px"></i>
<b class="ex pl"></b>
<span class="tx" style="left:18px">Faturamento</span>
<u class="cb" style="left:364px"></u>
<u class="cb" style="left:439px"></u>
<u class="cb" style="left:501px"></u>
<u class="cb" style="left:601px"></u>
<u class="cb" style="left:699px"></u>
<u class="cb" style="left:759px"></u>
</div>
<div class="tr" style="top:796px">
<i class="vl" style="left:8px;top:0px;height:17px"></i>
<i class="hl" style="left:13px;top:8px;width:4px"></i>
<b class="ex pl"></b>
<span class="tx" style="left:18px">Internação</span>
<u class="cb" style="left:364px"></u>
<u class="cb" style="left:439px"></u>
<u class="cb" style="left:501px"></u>
<u class="cb" style="left:601px"></u>
<u class="cb" style="left:699px"></u>
<u class="cb" style="left:759px"></u>
</div>
<div class="tr b" style="top:813px">
<i class="vl" style="left:8px;top:0px;height:17px"></i>
<i class="hl" style="left:13px;top:8px;width:4px"></i>
<b class="ex pl"></b>
<span class="tx" style="left:18px">Pronto Atendimento</span>
<u class="cb" style="left:364px"></u>
<u class="cb" style="left:439px"></u>
<u class="cb" style="left:501px"></u>
<u class="cb" style="left:601px"></u>
<u class="cb" style="left:699px"></u>
<u class="cb" style="left:759px"></u>
</div>
<div class="tr" style="top:830px">
<i class="vl" style="left:8px;top:0px;height:17px"></i>
<i class="hl" style="left:13px;top:8px;width:4px"></i>
<b class="ex pl"></b>
<span class="tx" style="left:18px">Recepção</span>
<u class="cb" style="left:364px"></u>
<u class="cb" style="left:439px"></u>
<u class="cb" style="left:501px"></u>
<u class="cb" style="left:601px"></u>
<u class="cb" style="left:699px"></u>
<u class="cb" style="left:759px"></u>
</div>
<div class="tr b" style="top:847px">
<i class="vl" style="left:8px;top:0px;height:17px"></i>
<i class="hl" style="left:13px;top:8px;width:4px"></i>
<b class="ex pl"></b>
<span class="tx" style="left:18px">Sistema</span>
<u class="cb" style="left:364px"></u>
<u class="cb" style="left:439px"></u>
<u class="cb" style="left:501px"></u>
<u class="cb" style="left:601px"></u>
<u class="cb" style="left:699px"></u>
<u class="cb" style="left:759px"></u>
</div>
<div class="tr" style="top:864px">
<i class="vl" style="left:8px;top:0px;height:17px"></i>
<i class="hl" style="left:13px;top:8px;width:4px"></i>
<b class="ex pl"></b>
<span class="tx" style="left:18px">SusAns</span>
<u class="cb" style="left:364px"></u>
<u class="cb" style="left:439px"></u>
<u class="cb" style="left:501px"></u>
<u class="cb" style="left:601px"></u>
<u class="cb" style="left:699px"></u>
<u class="cb" style="left:759px"></u>
</div>
<div class="tr b" style="top:881px">
<i class="vl" style="left:8px;top:0px;height:17px"></i>
<i class="hl" style="left:13px;top:8px;width:4px"></i>
<b class="ex pl"></b>
<span class="tx" style="left:18px">Terapia</span>
<u class="cb" style="left:364px"></u>
<u class="cb" style="left:439px"></u>
<u class="cb" style="left:501px"></u>
<u class="cb" style="left:601px"></u>
<u class="cb" style="left:699px"></u>
<u class="cb" style="left:759px"></u>
</div>
<div class="tr" style="top:898px">
<i class="vl" style="left:8px;top:0px;height:9px"></i>
<i class="hl" style="left:13px;top:8px;width:4px"></i>
<b class="ex pl"></b>
<span class="tx" style="left:18px">WorkStation</span>
<u class="cb" style="left:364px"></u>
<u class="cb" style="left:439px"></u>
<u class="cb" style="left:501px"></u>
<u class="cb" style="left:601px"></u>
<u class="cb" style="left:699px"></u>
<u class="cb" style="left:759px"></u>
</div>
<!-- red highlight boxes -->
<div class="red" style="left:126px;top:152px;width:64px;height:31px;border-width:3px"></div>
<div class="red" style="left:327px;top:108px;width:141px;height:44px;box-shadow:0 0 0 .5px #f94246"></div>
<div class="red" style="left:127px;top:220px;width:889px;height:26px;border-width:3px"></div>
<!-- numbered callouts -->
<svg class="co" style="left:0;top:0" width="1017" height="958" viewBox="0 0 1017 958">
<defs><filter id="ds" x="-20%" y="-20%" width="140%" height="150%"><feGaussianBlur in="SourceAlpha" stdDeviation="2"/><feOffset dx="0" dy="3"/><feComponentTransfer><feFuncA type="linear" slope=".5"/></feComponentTransfer><feMerge><feMergeNode/><feMergeNode in="SourceGraphic"/></feMerge></filter></defs>
<g fill="#f6a80f" filter="url(#ds)">
<path d="M191.0 167.0 C205.7 162.0 217.9 147.0 240.0 147.0 A20 20 0 0 1 240.0 187.0 C217.9 187.0 205.7 172.0 191.0 167.0Z"/>
<path d="M473.5 130.0 C488.1 125.0 500.2 110.0 522.0 110.0 A20 20 0 0 1 522.0 150.0 C500.2 150.0 488.1 135.0 473.5 130.0Z"/>
<path d="M124.5 232.5 C109.3 227.6 96.6 212.8 73.7 212.8 A19.7 19.7 0 0 0 73.7 252.2 C96.6 252.2 109.3 237.4 124.5 232.5Z"/>
<path d="M131.5 483.0 C111.1 478.4 94.0 464.7 63.4 464.7 A18.3 18.3 0 0 0 63.4 501.3 C94.0 501.3 111.1 487.6 131.5 483.0Z"/>
<path d="M686.4 512.8 C699.8 507.0 710.9 489.8 731.0 489.8 A23 23 0 0 1 731.0 535.8 C710.9 535.8 699.8 518.5 686.4 512.8Z"/>
<path d="M135.6 651.5 C115.6 646.8 98.9 632.6 68.9 632.6 A18.9 18.9 0 0 0 68.9 670.4 C98.9 670.4 115.6 656.2 135.6 651.5Z"/>
<path d="M919.3 685.9 C932.8 680.2 944.0 663.1 964.2 663.1 A22.8 22.8 0 0 1 964.2 708.7 C944.0 708.7 932.8 691.6 919.3 685.9Z"/>
</g>
<text x="232.5" y="174.7" style="font-size:21.4px">1</text>
<text x="514.7" y="137.7" style="font-size:21.4px">2</text>
<text x="79.6" y="240.0" style="font-size:21.1px">3</text>
<text x="79.3" y="490.0" style="font-size:19.6px">5</text>
<text x="726.0" y="521.6" style="font-size:24.6px">4</text>
<text x="84.3" y="658.7" style="font-size:20.2px">5</text>
<text x="959.4" y="694.6" style="font-size:24.4px">4</text>
<!-- mouse cursor -->
<path d="M307.500 693.500v17l4-3.500 3 6.500 2.500-1-3-6.500h5.500z" fill="#fff" stroke="#000" stroke-width="1"/>
</svg>

</body>
</html>
